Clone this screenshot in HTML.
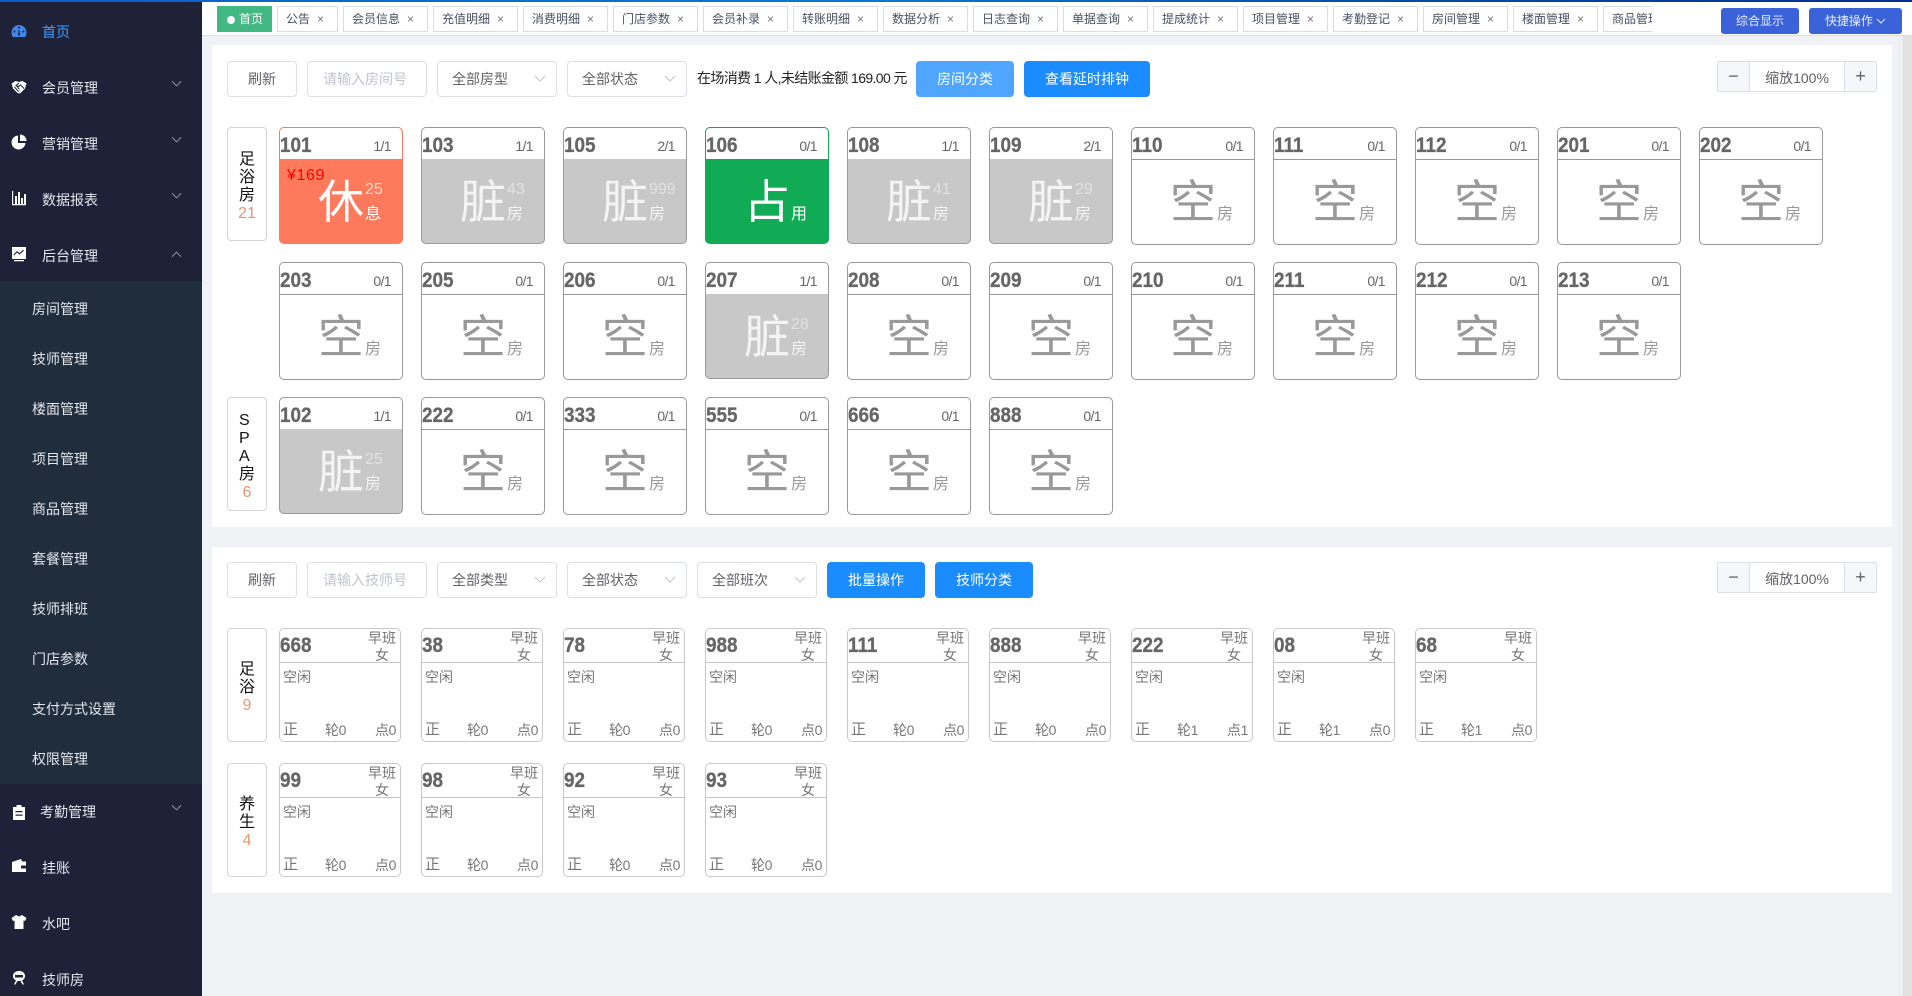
<!DOCTYPE html>
<html lang="zh-CN"><head><meta charset="utf-8"><title>房间管理</title>
<style>
*{box-sizing:border-box;margin:0;padding:0}
html,body{width:1912px;height:996px;overflow:hidden;background:#f0f2f5}
body{position:relative;font-family:"Liberation Sans","Noto Sans CJK SC",sans-serif;font-size:14px;color:#606266}
#strip{position:absolute;left:0;top:0;width:1912px;height:2px;background:linear-gradient(90deg,#0b5fc8 0,#0a78d8 45%,#0350ac 70%,#022f92 100%);z-index:5}
#side{position:absolute;left:0;top:0;width:202px;height:996px;background:#1f2138;color:#e4e7ed}
#side .sub{position:absolute;left:0;top:281px;width:202px;height:503px;background:#1f2d3d}
#side p{position:absolute;line-height:20px;white-space:nowrap}
#side svg{position:absolute;left:11px;width:16px;height:16px;fill:#fff}
#side .ar{width:11px;height:8px;left:171px;fill:none;stroke:#9296a8;stroke-width:1}
#top{position:absolute;left:202px;top:0;width:1710px;height:36px;background:#fff;border-bottom:1px solid #d8dce5}
.tab{position:absolute;top:6px;height:26px;width:85px;border:1px solid #d8dce5;background:#fff;font-size:12px;line-height:25px;padding-left:8px;color:#495060;white-space:nowrap;overflow:hidden}
.tab i{font-style:normal;font-size:12px;margin-left:7px;color:#777}
.hb{position:absolute;top:8px;height:26px;background:#3b62d8;color:#e8eeff;border-radius:3px;font-size:12px;line-height:26px;text-align:center}
.panel{position:absolute;left:212px;width:1680px;background:#fff}
.btn{position:absolute;height:36px;border:1px solid #dcdfe6;border-radius:4px;line-height:34px;background:#fff;white-space:nowrap}
.sel{width:120px;padding-left:14px}
.sel svg{position:absolute;right:10px;top:13px;width:12px;height:8px;fill:none;stroke:#c0c4cc}
.ph{color:#c0c4cc;width:120px;padding-left:15px}
.prim{border:0;line-height:36px;color:#fff;background:#1a8cff;text-align:center;width:98px}
.zoom{position:absolute;left:1717px;width:160px;height:31px;border:1px solid #dcdfe6;border-radius:2px;background:#fff;text-align:center;line-height:32px}
.zoom s{position:absolute;top:0;width:32px;height:29px;line-height:29px;background:#f5f7fa;text-decoration:none;font-size:18px;color:#606266}
.lab{position:absolute;left:227px;width:40px;height:114px;border:1px solid #d4d4d4;border-radius:4px;display:flex;flex-direction:column;align-items:center;justify-content:center;padding-top:5px;font-size:16px;line-height:18px;color:#111;background:#fff}
.lab em{font-style:normal;color:#e69870}
.r{position:absolute;width:124px;height:118px;border:1px solid #999;border-radius:5px;background:#fff;overflow:hidden;color:#666}
.r:before{content:"";position:absolute;left:0;right:0;top:31px;height:1px;background:#999}
.r b,.t b{position:absolute;left:0;top:6px;font-size:21px;line-height:24px;color:#666;transform:scaleX(.9);transform-origin:0 0;-webkit-text-stroke:.3px #666}
.r i{position:absolute;right:11px;top:8px;font-style:normal;line-height:20px;letter-spacing:-.6px;color:#666}
.r em{position:absolute;left:38px;top:51px;font-style:normal;font-size:46px;line-height:46px;color:#999}
.r u{position:absolute;left:85px;top:52px;text-decoration:none;font-size:16px;line-height:20px;color:#e2e2e2}
.r span{position:absolute;left:85px;top:77px;font-size:16px;line-height:20px;color:#999}
.f{border-color:#999;background:linear-gradient(#fff 31px,#c8c8c8 31px);height:117px}
.f:before{display:none}
.f em,.f span{color:#f4f4f4}
.g{border-color:#11ab55;background:linear-gradient(#fff 31px,#11ab55 31px);height:117px}
.g:before{display:none}
.g em,.g span{color:#fff}
.x{border-color:#ff7a5c;background:linear-gradient(#fff 31px,#ff7a5c 31px);height:117px}
.x:before{display:none}
.x em,.x span{color:#fff}
.x u{color:#ffd9cc}
.x q{position:absolute;left:7px;top:38px;quotes:none;color:#f00;font-size:16px;line-height:20px;white-space:nowrap;letter-spacing:.6px}
.t{position:absolute;width:122px;height:114px;border:1px solid #c8c8c8;border-radius:5px;background:#fff;color:#777}
.t:before{content:"";position:absolute;left:0;right:0;top:33px;height:1px;background:#c4c4c4}
.t b{top:5px}
.t i{position:absolute;right:4px;top:0;width:28px;font-style:normal;line-height:17px;text-align:center;padding-top:1px;white-space:nowrap}
.t span{position:absolute;left:3px;top:38px;line-height:20px}
.t u{position:absolute;top:91px;text-decoration:none;line-height:20px;white-space:nowrap;letter-spacing:-.4px}
.t u:nth-of-type(1){left:3px;font-size:15px}
.t u:nth-of-type(2){left:45px}
.t u:nth-of-type(3){left:95px}
#sb{position:absolute;left:1902px;top:36px;width:10px;height:960px;background:#e2e2e2;border-left:1px solid #eee}
#sl{position:absolute;left:1897px;top:36px;width:5px;height:960px;background:#eef0f6}
</style></head><body>
<div id="strip"></div>

<div id="side">
<div class="sub"></div>
<svg style="top:23px;fill:#3f86e8" viewBox="0 0 16 16"><path fill-rule="evenodd" d="M8 2a7.500 7.500 0 0 0-7.500 7.500c0 1.600.5 3.100 1.400 4.500h12.200c.9-1.400 1.400-2.900 1.400-4.500A7.500 7.500 0 0 0 8 2zm0 1.500a1 1 0 1 1 0 2 1 1 0 0 1 0-2zm-4.500 6a1 1 0 1 1 0-2 1 1 0 0 1 0 2zm9 0a1 1 0 1 1 0-2 1 1 0 0 1 0 2zM9 12.500H7l.6-5.500h.8z"/></svg>
<p style="left:42px;top:22px;color:#409eff">首页</p>
<svg style="top:79px" viewBox="0 0 16 16"><path d="M.5 4.500L4.500 2l3.500 1 3.500-1 4 2.500-1.500 5L9 14.500 6.500 14 2 9.500z"/><path d="M5 6l3.500 4.500M3.500 8l4 4.500M8 4l-3 2.500 2.500 1 2-1.500 3.500 3.500" fill="none" stroke="#1f2138" stroke-width="1"/></svg>
<p style="left:42px;top:78px">会员管理</p><svg class="ar" style="top:80px" viewBox="0 0 12 8"><path d="M1 1l5 5 5-5"/></svg>
<svg style="top:134px" viewBox="0 0 16 16"><path d="M7 1.500A7 7 0 1 0 14.500 9H7z"/><path d="M9 .5V7h6.500A6.500 6.500 0 0 0 9 .5z"/></svg>
<p style="left:42px;top:134px">营销管理</p><svg class="ar" style="top:136px" viewBox="0 0 12 8"><path d="M1 1l5 5 5-5"/></svg>
<svg style="top:190px" viewBox="0 0 16 16"><path d="M1 1h1.200v14H1zM4 6h2v8H4zM7 2h2v12H7zM10 8h2v6h-2zM13 4h2v10h-2zM1 14h14v1.200H1z"/></svg>
<p style="left:42px;top:190px">数据报表</p><svg class="ar" style="top:192px" viewBox="0 0 12 8"><path d="M1 1l5 5 5-5"/></svg>
<svg style="top:246px" viewBox="0 0 16 16"><path fill-rule="evenodd" d="M1 1h14v12H1zM3 9.500l3-3 2.500 2L13 4.500l-.8-.8-3.800 3.300L6 5 2.300 8.700zM3 14h10v1.200H3z"/></svg>
<p style="left:42px;top:246px">后台管理</p><svg class="ar" style="top:250px" viewBox="0 0 12 8"><path d="M1 7l5-5 5 5"/></svg>
<p style="left:32px;top:299px">房间管理</p>
<p style="left:32px;top:349px">技师管理</p>
<p style="left:32px;top:399px">楼面管理</p>
<p style="left:32px;top:449px">项目管理</p>
<p style="left:32px;top:499px">商品管理</p>
<p style="left:32px;top:549px">套餐管理</p>
<p style="left:32px;top:599px">技师排班</p>
<p style="left:32px;top:649px">门店参数</p>
<p style="left:32px;top:699px">支付方式设置</p>
<p style="left:32px;top:749px">权限管理</p>
<svg style="top:804px" viewBox="0 0 16 16"><path fill-rule="evenodd" d="M2 3h3.500V1h5v2H14v13H2zM4.500 7v1.200h7V7zm0 3.500v1.200h7v-1.200z"/></svg>
<p style="left:40px;top:802px">考勤管理</p><svg class="ar" style="top:804px" viewBox="0 0 12 8"><path d="M1 1l5 5 5-5"/></svg>
<svg style="top:858px" viewBox="0 0 16 16"><path fill-rule="evenodd" d="M1 4l9-3 1 2.500h4V14H1zM10 7.500v3h5v-3z"/></svg>
<p style="left:42px;top:858px">挂账</p>
<svg style="top:914px" viewBox="0 0 16 16"><path d="M5 1l3 1.500L11 1l4.500 3-1.500 3-1.500-.5V15h-9V6.500L2 7 .5 4z"/></svg>
<p style="left:42px;top:914px">水吧</p>
<svg style="top:970px" viewBox="0 0 16 16"><path fill-rule="evenodd" d="M8 1c3.500 0 6 2 6 5 0 2-1 3.500-3 4.300l2 4.200h-1.500L9.500 11h-3l-2 3.500H3l2-4.200C3 9.500 2 8 2 6c0-3 2.500-5 6-5zM4 5v2.500h8V5z"/></svg>
<p style="left:42px;top:970px">技师房</p>
</div>

<div id="top"></div>
<div class="tab" style="left:217px;width:55px;background:#42b983;border-color:#42b983;color:#fff;padding-left:21px"><span style="position:absolute;left:9px;top:9px;width:8px;height:8px;border-radius:50%;background:#fff"></span>首页</div>
<div class="tab" style="left:277px;width:61px">公告<i>×</i></div>
<div class="tab" style="left:343px">会员信息<i>×</i></div>
<div class="tab" style="left:433px">充值明细<i>×</i></div>
<div class="tab" style="left:523px">消费明细<i>×</i></div>
<div class="tab" style="left:613px">门店参数<i>×</i></div>
<div class="tab" style="left:703px">会员补录<i>×</i></div>
<div class="tab" style="left:793px">转账明细<i>×</i></div>
<div class="tab" style="left:883px">数据分析<i>×</i></div>
<div class="tab" style="left:973px">日志查询<i>×</i></div>
<div class="tab" style="left:1063px">单据查询<i>×</i></div>
<div class="tab" style="left:1153px">提成统计<i>×</i></div>
<div class="tab" style="left:1243px">项目管理<i>×</i></div>
<div class="tab" style="left:1333px">考勤登记<i>×</i></div>
<div class="tab" style="left:1423px">房间管理<i>×</i></div>
<div class="tab" style="left:1513px">楼面管理<i>×</i></div>
<div class="tab" style="left:1603px;width:49px;border-right:0">商品管理</div>
<div class="hb" style="left:1721px;width:78px">综合显示</div>
<div class="hb" style="left:1809px;width:93px">快捷操作 <svg width="10" height="7" viewBox="0 0 10 7" style="fill:none;stroke:#dfe6ff"><path d="M1 1l4 4 4-4"/></svg></div>

<div id="sl"></div><div id="sb"></div>
<div class="panel" style="top:45px;height:482px"></div>
<div class="panel" style="top:547px;height:346px"></div>

<div class="btn" style="left:227px;top:61px;width:70px;text-align:center">刷新</div>
<div class="btn ph" style="left:307px;top:61px">请输入房间号</div>
<div class="btn sel" style="left:437px;top:61px">全部房型<svg viewBox="0 0 12 8"><path d="M1 1l5 5 5-5"/></svg></div>
<div class="btn sel" style="left:567px;top:61px">全部状态<svg viewBox="0 0 12 8"><path d="M1 1l5 5 5-5"/></svg></div>
<div style="position:absolute;left:697px;top:68px;line-height:20px;color:#222;white-space:nowrap;letter-spacing:-.62px">在场消费 1 人,未结账金额 169.00 元</div>
<div class="btn prim" style="left:916px;top:61px;background:#4ea6ff">房间分类</div>
<div class="btn prim" style="left:1024px;top:61px;width:126px">查看延时排钟</div>
<div class="zoom" style="top:61px"><s style="left:0;border-right:1px solid #dcdfe6">−</s>缩放100%<s style="right:0;border-left:1px solid #dcdfe6">+</s></div>

<div class="lab" style="top:127px">足<br>浴<br>房<em>21</em></div>
<div class="lab" style="top:397px">S<br>P<br>A<br>房<em>6</em></div>

<div class="r x" style="left:279px;top:127px"><b>101</b><i>1/1</i><q>¥169</q><em>休</em><u>25</u><span>息</span></div>
<div class="r f" style="left:421px;top:127px"><b>103</b><i>1/1</i><em>脏</em><u>43</u><span>房</span></div>
<div class="r f" style="left:563px;top:127px"><b>105</b><i>2/1</i><em>脏</em><u>999</u><span>房</span></div>
<div class="r g" style="left:705px;top:127px"><b>106</b><i>0/1</i><em>占</em><span>用</span></div>
<div class="r f" style="left:847px;top:127px"><b>108</b><i>1/1</i><em>脏</em><u>41</u><span>房</span></div>
<div class="r f" style="left:989px;top:127px"><b>109</b><i>2/1</i><em>脏</em><u>29</u><span>房</span></div>
<div class="r" style="left:1131px;top:127px"><b>110</b><i>0/1</i><em>空</em><span>房</span></div>
<div class="r" style="left:1273px;top:127px"><b>111</b><i>0/1</i><em>空</em><span>房</span></div>
<div class="r" style="left:1415px;top:127px"><b>112</b><i>0/1</i><em>空</em><span>房</span></div>
<div class="r" style="left:1557px;top:127px"><b>201</b><i>0/1</i><em>空</em><span>房</span></div>
<div class="r" style="left:1699px;top:127px"><b>202</b><i>0/1</i><em>空</em><span>房</span></div>

<div class="r" style="left:279px;top:262px"><b>203</b><i>0/1</i><em>空</em><span>房</span></div>
<div class="r" style="left:421px;top:262px"><b>205</b><i>0/1</i><em>空</em><span>房</span></div>
<div class="r" style="left:563px;top:262px"><b>206</b><i>0/1</i><em>空</em><span>房</span></div>
<div class="r f" style="left:705px;top:262px"><b>207</b><i>1/1</i><em>脏</em><u>28</u><span>房</span></div>
<div class="r" style="left:847px;top:262px"><b>208</b><i>0/1</i><em>空</em><span>房</span></div>
<div class="r" style="left:989px;top:262px"><b>209</b><i>0/1</i><em>空</em><span>房</span></div>
<div class="r" style="left:1131px;top:262px"><b>210</b><i>0/1</i><em>空</em><span>房</span></div>
<div class="r" style="left:1273px;top:262px"><b>211</b><i>0/1</i><em>空</em><span>房</span></div>
<div class="r" style="left:1415px;top:262px"><b>212</b><i>0/1</i><em>空</em><span>房</span></div>
<div class="r" style="left:1557px;top:262px"><b>213</b><i>0/1</i><em>空</em><span>房</span></div>

<div class="r f" style="left:279px;top:397px"><b>102</b><i>1/1</i><em>脏</em><u>25</u><span>房</span></div>
<div class="r" style="left:421px;top:397px"><b>222</b><i>0/1</i><em>空</em><span>房</span></div>
<div class="r" style="left:563px;top:397px"><b>333</b><i>0/1</i><em>空</em><span>房</span></div>
<div class="r" style="left:705px;top:397px"><b>555</b><i>0/1</i><em>空</em><span>房</span></div>
<div class="r" style="left:847px;top:397px"><b>666</b><i>0/1</i><em>空</em><span>房</span></div>
<div class="r" style="left:989px;top:397px"><b>888</b><i>0/1</i><em>空</em><span>房</span></div>

<div class="btn" style="left:227px;top:562px;width:70px;text-align:center">刷新</div>
<div class="btn ph" style="left:307px;top:562px">请输入技师号</div>
<div class="btn sel" style="left:437px;top:562px">全部类型<svg viewBox="0 0 12 8"><path d="M1 1l5 5 5-5"/></svg></div>
<div class="btn sel" style="left:567px;top:562px">全部状态<svg viewBox="0 0 12 8"><path d="M1 1l5 5 5-5"/></svg></div>
<div class="btn sel" style="left:697px;top:562px">全部班次<svg viewBox="0 0 12 8"><path d="M1 1l5 5 5-5"/></svg></div>
<div class="btn prim" style="left:827px;top:562px">批量操作</div>
<div class="btn prim" style="left:935px;top:562px">技师分类</div>
<div class="zoom" style="top:562px"><s style="left:0;border-right:1px solid #dcdfe6">−</s>缩放100%<s style="right:0;border-left:1px solid #dcdfe6">+</s></div>

<div class="lab" style="top:628px">足<br>浴<em>9</em></div>
<div class="lab" style="top:763px">养<br>生<em>4</em></div>

<div class="t" style="left:279px;top:628px"><b>668</b><i>早班<br>女</i><span>空闲</span><u>正</u><u>轮0</u><u>点0</u></div>
<div class="t" style="left:421px;top:628px"><b>38</b><i>早班<br>女</i><span>空闲</span><u>正</u><u>轮0</u><u>点0</u></div>
<div class="t" style="left:563px;top:628px"><b>78</b><i>早班<br>女</i><span>空闲</span><u>正</u><u>轮0</u><u>点0</u></div>
<div class="t" style="left:705px;top:628px"><b>988</b><i>早班<br>女</i><span>空闲</span><u>正</u><u>轮0</u><u>点0</u></div>
<div class="t" style="left:847px;top:628px"><b>111</b><i>早班<br>女</i><span>空闲</span><u>正</u><u>轮0</u><u>点0</u></div>
<div class="t" style="left:989px;top:628px"><b>888</b><i>早班<br>女</i><span>空闲</span><u>正</u><u>轮0</u><u>点0</u></div>
<div class="t" style="left:1131px;top:628px"><b>222</b><i>早班<br>女</i><span>空闲</span><u>正</u><u>轮1</u><u>点1</u></div>
<div class="t" style="left:1273px;top:628px"><b>08</b><i>早班<br>女</i><span>空闲</span><u>正</u><u>轮1</u><u>点0</u></div>
<div class="t" style="left:1415px;top:628px"><b>68</b><i>早班<br>女</i><span>空闲</span><u>正</u><u>轮1</u><u>点0</u></div>

<div class="t" style="left:279px;top:763px"><b>99</b><i>早班<br>女</i><span>空闲</span><u>正</u><u>轮0</u><u>点0</u></div>
<div class="t" style="left:421px;top:763px"><b>98</b><i>早班<br>女</i><span>空闲</span><u>正</u><u>轮0</u><u>点0</u></div>
<div class="t" style="left:563px;top:763px"><b>92</b><i>早班<br>女</i><span>空闲</span><u>正</u><u>轮0</u><u>点0</u></div>
<div class="t" style="left:705px;top:763px"><b>93</b><i>早班<br>女</i><span>空闲</span><u>正</u><u>轮0</u><u>点0</u></div>
</body></html>
